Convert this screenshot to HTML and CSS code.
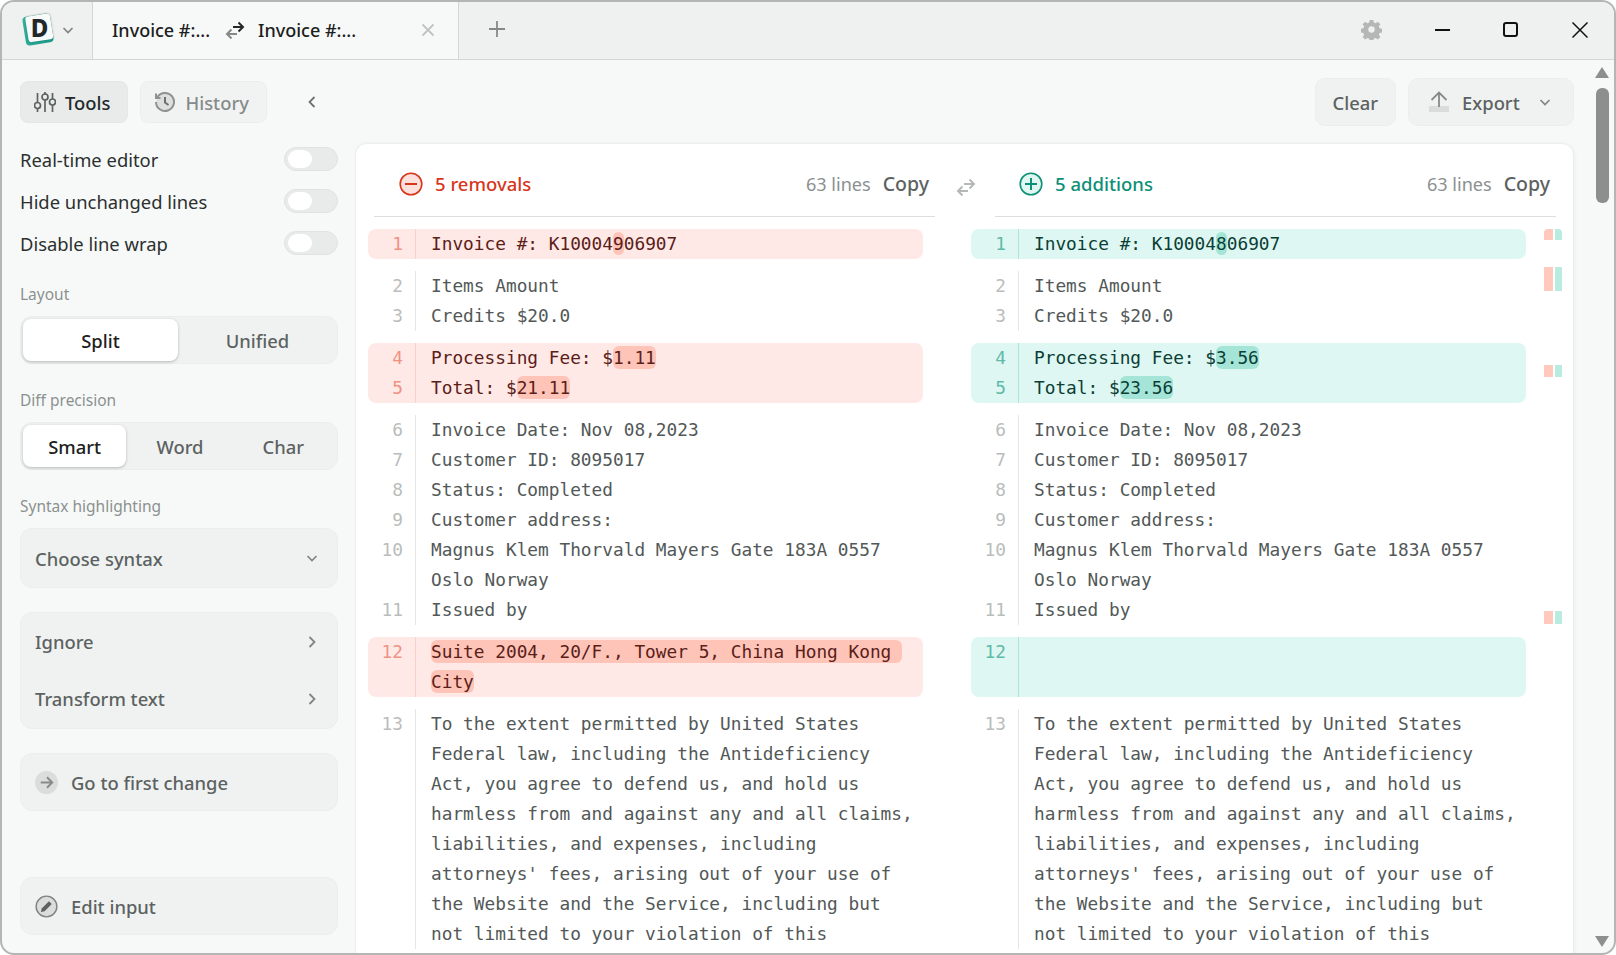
FILE: index.html
```html
<!DOCTYPE html>
<html lang="en">

<head>
    <meta charset="UTF-8">
    <title>Diffchecker</title>
    <link rel="stylesheet" href="styles.css">
</head>

<body>
    <div class="window">
        <header class="titlebar">
            <div class="app-menu">
                <div class="logo"><span class="logo-card"><span class="logo-face"><span class="logo-letter">D</span></span></span></div>
                <svg class="chev-small" viewBox="0 0 12 12"><path d="M1.500 4l4.500 4.500L10.500 4" /></svg>
            </div>
            <div class="tab">
                <span class="tab-name">Invoice #:...</span>
                <svg class="tab-swap" viewBox="0 0 20 18">
                    <path class="swap-a" d="M12 13H2M6.500 8.500L2 13l4.500 4.500" />
                    <path class="swap-b" d="M8 6h10M13.500 1.500L18 6l-4.500 4.500" />
                </svg>
                <span class="tab-name">Invoice #:...</span>
                <svg class="tab-close" viewBox="0 0 14 14"><path d="M1.500 1.500l11 11M12.500 1.500l-11 11" /></svg>
            </div>
            <svg class="tab-add" viewBox="0 0 18 18"><path d="M9 1v16M1 9h16" /></svg>
            <div class="title-actions">
                <svg class="gear" viewBox="0 0 24 24"><path d="M10 1h4l.6 3 2.100.9 2.600-1.700 2.800 2.800-1.700 2.600.9 2.100 3 .6v4l-3 .6-.9 2.100 1.700 2.600-2.800 2.800-2.600-1.700-2.100.9-.6 3h-4l-.6-3-2.100-.9-2.600 1.700-2.800-2.800 1.700-2.600-.9-2.100-3-.6v-4l3-.6.9-2.100-1.700-2.600 2.800-2.800 2.600 1.700 2.100-.9z" /><circle cx="12" cy="12" r="3.600" /></svg>
                <span class="win-min"></span>
                <span class="win-max"></span>
                <svg class="win-close" viewBox="0 0 16 16"><path d="M.5.5l15 15M15.500.5l-15 15" /></svg>
            </div>
        </header>

        <div class="content">
            <aside class="sidebar">
                <div class="side-tabs">
                    <button class="side-tab active">
                        <svg class="tab-ico" viewBox="0 0 22 22">
                            <path d="M3.500 2v9M3.500 18v3M11 1v2M11 9v12M18.500 2v6M18.500 14v7" />
                            <circle cx="3.500" cy="14.500" r="3" /><circle cx="11" cy="6" r="3" /><circle cx="18.500" cy="11" r="3" />
                        </svg>
                        Tools
                    </button>
                    <button class="side-tab">
                        <svg class="tab-ico hist" viewBox="0 0 22 22">
                            <path class="hist-face" d="M3.500 6A9 9 0 1 1 2 11M2 2.500V7h4.500" />
                            <path class="hist-hand" d="M11 6v5.500l3.500 2.500" />
                        </svg>
                        History
                    </button>
                    <svg class="collapse" viewBox="0 0 10 14"><path d="M7.500 2L2.500 7l5 5" /></svg>
                </div>

                <div class="toggles">
                    <div class="toggle-row"><span>Real-time editor</span><span class="toggle"><i></i></span></div>
                    <div class="toggle-row"><span>Hide unchanged lines</span><span class="toggle"><i></i></span></div>
                    <div class="toggle-row"><span>Disable line wrap</span><span class="toggle"><i></i></span></div>
                </div>

                <div class="group-label">Layout</div>
                <div class="segment">
                    <div class="seg-item on">Split</div>
                    <div class="seg-item">Unified</div>
                </div>

                <div class="group-label">Diff precision</div>
                <div class="segment">
                    <div class="seg-item on">Smart</div>
                    <div class="seg-item">Word</div>
                    <div class="seg-item">Char</div>
                </div>

                <div class="group-label">Syntax highlighting</div>
                <div class="panel select">
                    <span>Choose syntax</span>
                    <svg class="chev-small" viewBox="0 0 12 12"><path d="M1.500 4l4.500 4.500L10.500 4" /></svg>
                </div>

                <div class="panel menu">
                    <div class="menu-row"><span>Ignore</span><svg class="chev-right" viewBox="0 0 10 14"><path d="M2.500 2l5 5-5 5" /></svg></div>
                    <div class="menu-row"><span>Transform text</span><svg class="chev-right" viewBox="0 0 10 14"><path d="M2.500 2l5 5-5 5" /></svg></div>
                </div>

                <div class="panel action first-change">
                    <svg class="action-ico" viewBox="0 0 24 24"><circle class="ico-bg" cx="12" cy="12" r="12" /><path class="ico-line" d="M6 12h12M12.500 6.500L18 12l-5.500 5.500" /></svg>
                    <span>Go to first change</span>
                </div>

                <div class="panel action edit-input">
                    <svg class="action-ico" viewBox="0 0 24 24"><circle class="ico-bg ring" cx="12" cy="12" r="10.800" /><path class="ico-pen" d="M14.500 6.500l3 3-7.500 7.500-3.800.8.800-3.800z" /></svg>
                    <span>Edit input</span>
                </div>
            </aside>

            <main class="main">
                <div class="top-actions">
                    <button class="btn">Clear</button>
                    <button class="btn export">
                        <svg class="export-ico" viewBox="0 0 20 22"><rect class="tray" x="0" y="15" width="20" height="6" /><path d="M10 16V2M2.500 9L10 1.500 17.500 9" /></svg>
                        <span>Export</span>
                        <svg class="chev-small" viewBox="0 0 12 12"><path d="M1.500 4l4.500 4.500L10.500 4" /></svg>
                    </button>
                </div>

                <section class="card">
                    <div class="pane removed">
                        <div class="pane-head">
                            <svg class="count-ico" viewBox="0 0 24 24"><circle cx="12" cy="12" r="10.800" /><path d="M6 12h12" /></svg>
                            <span class="count">5 removals</span>
                            <span class="lines">63 lines</span>
                            <span class="copy">Copy</span>
                        </div>
                        <div class="diff">
                            <div class="block changed">
                                <div class="ln"><b>1</b><span>Invoice #: K10004<em>9</em>06907</span></div>
                            </div>
                            <div class="block">
                                <div class="ln"><b>2</b><span>Items Amount</span></div>
                                <div class="ln"><b>3</b><span>Credits $20.0</span></div>
                            </div>
                            <div class="block changed">
                                <div class="ln"><b>4</b><span>Processing Fee: $<em>1.11</em></span></div>
                                <div class="ln"><b>5</b><span>Total: $<em>21.11</em></span></div>
                            </div>
                            <div class="block">
                                <div class="ln"><b>6</b><span>Invoice Date: Nov 08,2023</span></div>
                                <div class="ln"><b>7</b><span>Customer ID: 8095017</span></div>
                                <div class="ln"><b>8</b><span>Status: Completed</span></div>
                                <div class="ln"><b>9</b><span>Customer address:</span></div>
                                <div class="ln"><b>10</b><span>Magnus Klem Thorvald Mayers Gate 183A 0557 Oslo Norway</span></div>
                                <div class="ln"><b>11</b><span>Issued by</span></div>
                            </div>
                            <div class="block changed">
                                <div class="ln"><b>12</b><span><em>Suite 2004, 20/F., Tower 5, China Hong Kong City</em></span></div>
                            </div>
                            <div class="block">
                                <div class="ln"><b>13</b><span>To the extent permitted by United States Federal law, including the Antideficiency Act, you agree to defend us, and hold us harmless from and against any and all claims, liabilities, and expenses, including attorneys' fees, arising out of your use of the Website and the Service, including but not limited to your violation of this</span></div>
                            </div>
                        </div>
                    </div>

                    <svg class="swap-mid" viewBox="0 0 20 18">
                        <path d="M12 13H2M6.500 8.500L2 13l4.500 4.500" />
                        <path d="M8 6h10M13.500 1.500L18 6l-4.500 4.500" />
                    </svg>

                    <div class="pane added">
                        <div class="pane-head">
                            <svg class="count-ico" viewBox="0 0 24 24"><circle cx="12" cy="12" r="10.800" /><path d="M6 12h12M12 6v12" /></svg>
                            <span class="count">5 additions</span>
                            <span class="lines">63 lines</span>
                            <span class="copy">Copy</span>
                        </div>
                        <div class="diff">
                            <div class="block changed">
                                <div class="ln"><b>1</b><span>Invoice #: K10004<em>8</em>06907</span></div>
                            </div>
                            <div class="block">
                                <div class="ln"><b>2</b><span>Items Amount</span></div>
                                <div class="ln"><b>3</b><span>Credits $20.0</span></div>
                            </div>
                            <div class="block changed">
                                <div class="ln"><b>4</b><span>Processing Fee: $<em>3.56</em></span></div>
                                <div class="ln"><b>5</b><span>Total: $<em>23.56</em></span></div>
                            </div>
                            <div class="block">
                                <div class="ln"><b>6</b><span>Invoice Date: Nov 08,2023</span></div>
                                <div class="ln"><b>7</b><span>Customer ID: 8095017</span></div>
                                <div class="ln"><b>8</b><span>Status: Completed</span></div>
                                <div class="ln"><b>9</b><span>Customer address:</span></div>
                                <div class="ln"><b>10</b><span>Magnus Klem Thorvald Mayers Gate 183A 0557 Oslo Norway</span></div>
                                <div class="ln"><b>11</b><span>Issued by</span></div>
                            </div>
                            <div class="block changed">
                                <div class="ln tall"><b>12</b><span></span></div>
                            </div>
                            <div class="block">
                                <div class="ln"><b>13</b><span>To the extent permitted by United States Federal law, including the Antideficiency Act, you agree to defend us, and hold us harmless from and against any and all claims, liabilities, and expenses, including attorneys' fees, arising out of your use of the Website and the Service, including but not limited to your violation of this</span></div>
                            </div>
                        </div>
                    </div>

                    <div class="minimap">
                        <i class="mark m1"></i>
                        <i class="mark m2"></i>
                        <i class="mark m3"></i>
                        <i class="mark m4"></i>
                    </div>
                </section>
            </main>

            <div class="scrollbar">
                <span class="arrow-up"></span>
                <span class="thumb"></span>
                <span class="arrow-down"></span>
            </div>
        </div>
    </div>
</body>

</html>
```

FILE: styles.css
```css
* {
    box-sizing: border-box;
}

html,
body {
    height: 100%;
}

body {
    margin: 0;
    background: #ffffff;
    overflow: hidden;
    font-family: "Noto Sans", "Open Sans", sans-serif;
    font-size: 18.400px;
    color: #1f2423;
}

svg {
    display: block;
    flex: none;
    fill: none;
}

.window {
    height: 955px;
    display: flex;
    flex-direction: column;
    background: #f7f9f8;
    border: 2px solid #b4b6b5;
    border-radius: 14px;
    overflow: hidden;
}

/* title bar */
.titlebar {
    height: 58px;
    flex: none;
    display: flex;
    align-items: center;
    background: #eff1f0;
    border-bottom: 1px solid #d4d6d5;
}

.app-menu {
    width: 91px;
    height: 100%;
    display: flex;
    align-items: center;
    gap: 7px;
    padding: 0 0 2px 19px;
    border-right: 1px solid #d4d6d5;
}

.logo {
    width: 34px;
    height: 34px;
    display: flex;
    align-items: center;
    justify-content: center;
}

.logo-card {
    width: 28px;
    height: 29px;
    display: flex;
    justify-content: flex-end;
    background: linear-gradient(to bottom right, #36b5a0, #1b9c8c);
    border-radius: 4px;
    transform: rotate(-9deg);
}

.logo-face {
    width: 25px;
    height: 26px;
    display: flex;
    align-items: center;
    justify-content: center;
    background: #f8f9f9;
    border-radius: 3px;
    box-shadow: 0 0 2px #00000055;
}

.logo-letter {
    font-size: 24px;
    font-weight: 800;
    line-height: 1;
    color: #22272a;
    transform: rotate(9deg);
}

.chev-small {
    width: 12px;
    height: 12px;
}

.chev-small path {
    stroke: #7f8584;
    stroke-width: 1.700;
}

.tab {
    width: 366px;
    height: 100%;
    display: flex;
    align-items: center;
    padding: 0 0 2px 19px;
    background: #f7f9f8;
    border-right: 1px solid #d4d6d5;
}

.tab-name {
    font-size: 18px;
    font-weight: 500;
    color: #1c2120;
}

.tab-swap {
    width: 20px;
    height: 18px;
    margin: 0 13px 0 15px;
}

.swap-a {
    stroke: #858a89;
    stroke-width: 2;
}

.swap-b {
    stroke: #23282a;
    stroke-width: 2;
}

.tab-close {
    width: 14px;
    height: 14px;
    margin-left: auto;
    margin-right: 23px;
}

.tab-close path {
    stroke: #c0c3c2;
    stroke-width: 1.800;
}

.tab-add {
    width: 18px;
    height: 18px;
    margin: 0 0 3px 29px;
}

.tab-add path {
    stroke: #85898a;
    stroke-width: 1.800;
}

.title-actions {
    margin: 0 0 2px auto;
    display: flex;
    align-items: center;
    padding-right: 26px;
}

.gear {
    width: 21px;
    height: 21px;
    margin-right: 53px;
    fill: #b3b8b7;
}

.gear circle {
    fill: #eff1f0;
}

.win-min {
    width: 15px;
    height: 2px;
    background: #111111;
    margin-right: 53px;
}

.win-max {
    width: 15px;
    height: 15px;
    border: 2px solid #111111;
    border-radius: 3px;
    margin-right: 54px;
}

.win-close {
    width: 16px;
    height: 16px;
}

.win-close path {
    stroke: #111111;
    stroke-width: 1.500;
}

/* body */
.content {
    flex: 1;
    min-height: 0;
    display: flex;
}

.sidebar {
    width: 353px;
    flex: none;
    display: flex;
    flex-direction: column;
    padding: 21px 17px 18px 18px;
}

.side-tabs {
    display: flex;
    align-items: center;
    gap: 12px;
}

.side-tab {
    height: 42px;
    display: flex;
    align-items: center;
    gap: 9px;
    padding: 0 17px 0 13px;
    border: 1px solid #eceeed;
    border-radius: 8px;
    background: #f1f3f2;
    font: 500 18.400px "Noto Sans", sans-serif;
    color: #858b8a;
}

.side-tab.active {
    background: #e8ebea;
    border-color: #e4e7e6;
    color: #23282a;
}

.tab-ico {
    width: 22px;
    height: 22px;
    stroke: #5c6261;
    stroke-width: 1.700;
}

.hist-face {
    fill: #dcdfde;
    stroke: #8c9291;
    stroke-width: 2;
}

.hist-hand {
    stroke: #6b7170;
    stroke-width: 2;
}

.collapse {
    width: 10px;
    height: 14px;
    margin-left: 28px;
    stroke: #6d7372;
    stroke-width: 1.800;
}

.toggles {
    margin: 24px 0 3px;
    display: flex;
    flex-direction: column;
    gap: 18px;
}

.toggle-row {
    height: 24px;
    display: flex;
    align-items: center;
    justify-content: space-between;
    color: #2b302f;
}

.toggle {
    width: 54px;
    height: 24px;
    padding: 2px 3px;
    border: 1px solid #e0e3e2;
    border-radius: 12px;
    background: #e8ebea;
}

.toggle i {
    display: block;
    width: 24px;
    height: 18px;
    border-radius: 9px;
    background: #ffffff;
}

.group-label {
    margin-top: 24px;
    height: 24px;
    line-height: 24px;
    font-size: 15.500px;
    color: #8b9190;
}

.segment {
    height: 48px;
    margin-top: 10px;
    display: flex;
    padding: 2px;
    border: 1px solid #eceeed;
    border-radius: 12px;
    background: #f0f2f1;
}

.seg-item {
    flex: 1;
    display: flex;
    align-items: center;
    justify-content: center;
    border-radius: 8px;
    font-weight: 500;
    color: #5c6261;
}

.seg-item.on {
    margin-right: 2px;
    background: #ffffff;
    color: #1c2120;
    box-shadow: 0 1px 3px #00000040;
}

.panel {
    border: 1px solid #eceeed;
    border-radius: 12px;
    background: #f0f2f1;
    font-weight: 500;
    color: #5c6261;
}

.select {
    height: 60px;
    margin-top: 10px;
    display: flex;
    align-items: center;
    justify-content: space-between;
    padding: 0 19px 0 14px;
}

.menu {
    margin-top: 24px;
    height: 117px;
}

.menu-row {
    height: 57px;
    display: flex;
    align-items: center;
    justify-content: space-between;
    padding: 0 20px 0 14px;
}

.chev-right {
    width: 10px;
    height: 14px;
    stroke: #7f8584;
    stroke-width: 1.800;
}

.action {
    height: 58px;
    display: flex;
    align-items: center;
    gap: 13px;
    padding-left: 14px;
}

.first-change {
    margin-top: 24px;
}

.edit-input {
    margin-top: auto;
}

.action-ico {
    width: 23px;
    height: 23px;
}

.ico-bg {
    fill: #dadddc;
}

.ico-bg.ring {
    stroke: #7d8382;
    stroke-width: 1.500;
}

.ico-line {
    stroke: #858b8a;
    stroke-width: 2;
}

.ico-pen {
    fill: #5c6261;
}

/* main */
.main {
    flex: 1;
    min-width: 0;
    padding: 18px 16px 0 0;
    overflow: hidden;
}

.top-actions {
    height: 48px;
    display: flex;
    justify-content: flex-end;
    gap: 12px;
}

.btn {
    height: 48px;
    border: 1px solid #eceeed;
    border-radius: 10px;
    background: #f0f2f1;
    padding: 0 17px;
    font: 500 18.400px "Noto Sans", sans-serif;
    color: #5c6261;
}

.export {
    width: 166px;
    display: flex;
    align-items: center;
    padding: 0 22px 0 20px;
}

.export span {
    margin: 0 auto 0 13px;
}

.export-ico {
    width: 20px;
    height: 22px;
}

.export-ico path {
    stroke: #858b8a;
    stroke-width: 1.800;
}

.tray {
    fill: #d9dcdb;
}

.card {
    position: relative;
    height: 900px;
    margin-top: 17px;
    display: flex;
    padding: 0 12px;
    background: #ffffff;
    border: 1px solid #eceeed;
    border-radius: 12px;
    box-shadow: 0 1px 4px #00000012;
}

.pane {
    width: 555px;
    flex: none;
}

.pane-head {
    height: 73px;
    margin: 0 -12px 12px 6px;
    padding: 7px 6px 0 25px;
    display: flex;
    align-items: center;
    border-bottom: 1px solid #dcdfde;
}

.added .pane-head {
    margin: 0 -30px 12px 24px;
    padding-left: 24px;
}

.count-ico {
    width: 24px;
    height: 24px;
}

.count-ico circle {
    stroke-width: 1.600;
}

.count-ico path {
    stroke-width: 2;
}

.removed .count-ico circle {
    stroke: #d8351c;
    fill: #fbe0db;
}

.removed .count-ico path {
    stroke: #d8351c;
}

.added .count-ico circle {
    stroke: #0d8f78;
    fill: #dff6f1;
}

.added .count-ico path {
    stroke: #0d8f78;
}

.count {
    margin-left: 12px;
    font-size: 18.500px;
    font-weight: 500;
}

.removed .count {
    color: #d8351c;
}

.added .count {
    color: #0d8f78;
}

.lines {
    margin-left: auto;
    font-size: 18.100px;
    color: #8b9190;
}

.copy {
    margin-left: 12px;
    font-size: 19.500px;
    font-weight: 500;
    color: #5c6261;
}

.swap-mid {
    width: 20px;
    height: 18px;
    margin: 34px -5px 0 33px;
    stroke: #b4b8b7;
    stroke-width: 2;
}

/* diff lines */
.block {
    margin-bottom: 12px;
    border-radius: 8px;
    font-family: "DejaVu Sans Mono", monospace;
    font-size: 17.800px;
    line-height: 30px;
    color: #525857;
}

.ln {
    display: flex;
    min-height: 30px;
}

.ln b {
    width: 48px;
    flex: none;
    padding-right: 12px;
    text-align: right;
    font-weight: 400;
    color: #b9bdbc;
    border-right: 1px solid #e4e7e6;
}

.ln span {
    width: 505px;
    padding-left: 15px;
    white-space: pre-wrap;
}

.ln em {
    font-style: normal;
    border-radius: 6px;
    padding: 1px 0;
    -webkit-box-decoration-break: clone;
    box-decoration-break: clone;
}

.ln.tall {
    min-height: 60px;
}

.removed .changed {
    background: #ffe9e6;
    color: #5a2018;
}

.removed .changed b {
    color: #ef9285;
    border-color: #fbcfc8;
}

.removed .changed em {
    background: #ffc4b8;
}

.added .changed {
    background: #def7f2;
    color: #0b3e35;
}

.added .changed b {
    color: #5fbaa8;
    border-color: #a9e5d8;
}

.added .changed em {
    background: #a5e5d8;
}

/* overview marks */
.minimap {
    position: absolute;
    top: 85px;
    right: 11px;
    width: 18px;
    height: 400px;
}

.mark {
    position: absolute;
    left: 0;
    width: 100%;
    background: linear-gradient(to right, #ffc9bd 0 9px, transparent 9px 11px, #b9ebdf 11px);
}

.m1 {
    top: 0;
    height: 11px;
    border-radius: 4px 4px 0 0;
}

.m2 {
    top: 38px;
    height: 24px;
}

.m3 {
    top: 136px;
    height: 12px;
}

.m4 {
    top: 382px;
    height: 13px;
}

/* page scrollbar */
.scrollbar {
    width: 24px;
    flex: none;
    display: flex;
    flex-direction: column;
    align-items: center;
    padding: 7px 0 6px;
}

.arrow-up {
    width: 0;
    height: 0;
    border-left: 7px solid transparent;
    border-right: 7px solid transparent;
    border-bottom: 11px solid #8d8f8e;
}

.thumb {
    width: 13px;
    height: 115px;
    margin-top: 10px;
    border-radius: 6px;
    background: #8d8f8e;
}

.arrow-down {
    width: 0;
    height: 0;
    margin-top: auto;
    border-left: 7px solid transparent;
    border-right: 7px solid transparent;
    border-top: 11px solid #8d8f8e;
}
```
